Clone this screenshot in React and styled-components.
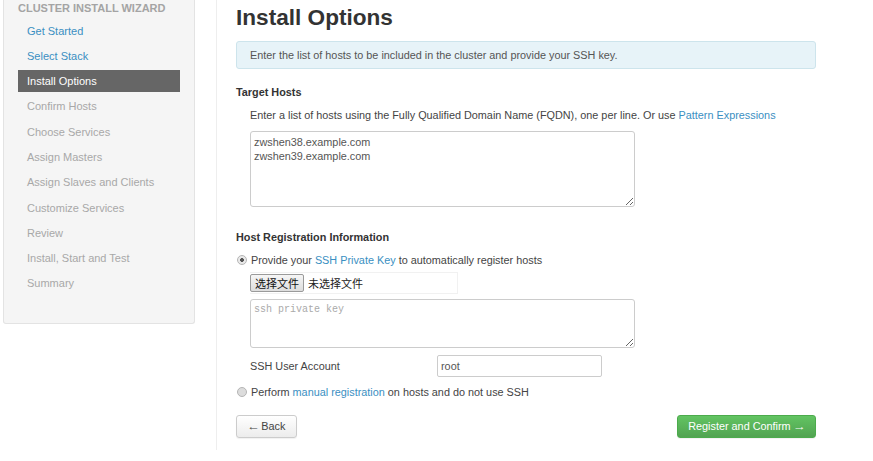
import React from "react";
import styled, { createGlobalStyle } from "styled-components";

const GlobalStyle = createGlobalStyle`
  body {
    margin: 0;
    background: #ffffff;
    font-family: "Liberation Sans", Arial, sans-serif;
    font-size: 10.85px;
    color: #333;
  }
`;

const Page = styled.div`
  display: flex;
  align-items: flex-start;
  width: 873px;
  height: 461px;
  overflow: hidden;
`;

const Sidebar = styled.div`
  margin-left: 3px;
  padding: 1px 14px 27px;
  box-sizing: border-box;
  width: 192px;
  background: #f5f5f5;
  border: 1px solid #e3e3e3;
  border-top: none;
  border-radius: 0 0 3px 3px;
`;

const SideHeader = styled.div`
  line-height: 14px;
  font-size: 11px;
  font-weight: bold;
  color: #a4a4a4;
  text-transform: uppercase;
  margin-bottom: 3px;
`;

const NavList = styled.div`
  display: flex;
  flex-direction: column;
`;

const NavItem = styled.div`
  height: 22px;
  line-height: 22px;
  margin: 1.65px 0;
  padding-left: 9px;
  font-size: 11px;
  color: ${(p) => (p.$state === "done" ? "#3a8fc2" : p.$state === "active" ? "#ffffff" : "#a8a8a8")};
  background: ${(p) => (p.$state === "active" ? "#666666" : "transparent")};
`;

const Content = styled.div`
  margin-left: 21px;
  border-left: 1px solid #eeeeee;
  padding-left: 19px;
  height: 450px;
  width: 580px;
`;

const Title = styled.h2`
  margin: 0;
  padding-top: 5px;
  line-height: 26px;
  font-size: 22.6px;
  font-weight: bold;
  color: #333;
`;

const Alert = styled.div`
  margin-top: 10px;
  height: 26px;
  line-height: 26px;
  padding-left: 13px;
  background: #e7f3f8;
  border: 1px solid #cde4ec;
  border-radius: 3px;
  color: #555;
`;

const SectionTitle = styled.div`
  margin-top: ${(p) => p.$top}px;
  line-height: 14px;
  font-weight: bold;
  color: #333;
`;

const Indented = styled.div`
  padding-left: 14px;
`;

const Text = styled.div`
  margin-top: ${(p) => p.$top || 0}px;
  line-height: 14px;
  color: #444;
`;

const Link = styled.a`
  color: #3a8fc2;
  text-decoration: none;
`;

const TextArea = styled.textarea`
  display: block;
  margin-top: ${(p) => p.$top}px;
  width: 385px;
  height: ${(p) => p.$h}px;
  box-sizing: border-box;
  padding: 3px 3px;
  border: 1px solid #cccccc;
  border-radius: 3px;
  font-family: ${(p) => (p.$mono ? '"Liberation Mono", monospace' : '"Liberation Sans", Arial, sans-serif')};
  font-size: ${(p) => (p.$mono ? 10 : 10.85)}px;
  line-height: 14px;
  color: #555;
  resize: vertical;
  outline: none;
  &::placeholder {
    color: #aaaaaa;
  }
`;

const RadioRow = styled.div`
  display: flex;
  align-items: center;
  margin-top: ${(p) => p.$top}px;
  line-height: 14px;
  color: #444;
  gap: 4px;
`;

const Radio = styled.span`
  width: 8px;
  height: 8px;
  border-radius: 50%;
  border: 1px solid #b5b5b5;
  background: ${(p) => (p.$checked ? "radial-gradient(circle, #555 0 1.6px, #e9e9e9 2.2px)" : "#dcdcdc")};
  margin-left: 1px;
`;

const FileRow = styled.div`
  display: flex;
  align-items: center;
  margin-top: 5px;
  margin-left: 14px;
  width: 208px;
  height: 22px;
  box-sizing: border-box;
  border: 1px solid #f1f1f1;
  border-left: none;
  font-family: "Noto Sans CJK SC", sans-serif;
  font-size: 11px;
  color: #222;
`;

const FileButton = styled.button`
  height: 18px;
  padding: 0 4px;
  margin-right: 4px;
  border: 1px solid #9a9a9a;
  border-radius: 2px;
  background: linear-gradient(#f6f6f6, #dddddd);
  font-family: "Noto Sans CJK SC", sans-serif;
  font-size: 11px;
  line-height: 16px;
  color: #111;
`;

const FieldRow = styled.div`
  display: flex;
  align-items: center;
  margin-top: 7px;
  padding-left: 14px;
  height: 22px;
`;

const FieldLabel = styled.div`
  width: 187px;
  color: #444;
`;

const Input = styled.input`
  width: 165px;
  height: 22px;
  box-sizing: border-box;
  padding: 0 3px;
  border: 1px solid #cccccc;
  border-radius: 2px;
  font-family: "Liberation Sans", Arial, sans-serif;
  font-size: 10.85px;
  color: #555;
  outline: none;
`;

const Actions = styled.div`
  display: flex;
  justify-content: space-between;
  margin-top: 16px;
`;

const Button = styled.button`
  height: 23px;
  padding: 0 ${(p) => (p.$primary ? 10.5 : 10.5)}px;
  border-radius: 3px;
  font-family: "Liberation Sans", Arial, sans-serif;
  font-size: 10.85px;
  line-height: 21px;
  color: ${(p) => (p.$primary ? "#ffffff" : "#444")};
  border: 1px solid ${(p) => (p.$primary ? "#4cab4c" : "#cccccc")};
  background: ${(p) =>
    p.$primary ? "linear-gradient(#62c462, #51a351)" : "linear-gradient(#ffffff, #ececec)"};
  box-shadow: 0 1px 1px rgba(0, 0, 0, 0.06);
`;

const Arrow = styled.span`
  display: inline-block;
  transform: scaleX(1.2);
`;

const steps = [
  ["Get Started", "done"],
  ["Select Stack", "done"],
  ["Install Options", "active"],
  ["Confirm Hosts", "todo"],
  ["Choose Services", "todo"],
  ["Assign Masters", "todo"],
  ["Assign Slaves and Clients", "todo"],
  ["Customize Services", "todo"],
  ["Review", "todo"],
  ["Install, Start and Test", "todo"],
  ["Summary", "todo"],
];

export default function App() {
  return (
    <>
      <GlobalStyle />
      <Page>
        <Sidebar>
          <SideHeader>Cluster Install Wizard</SideHeader>
          <NavList>
            {steps.map(([name, state]) => (
              <NavItem key={name} $state={state}>
                {name}
              </NavItem>
            ))}
          </NavList>
        </Sidebar>

        <Content>
          <Title>Install Options</Title>
          <Alert>Enter the list of hosts to be included in the cluster and provide your SSH key.</Alert>

          <SectionTitle $top={16}>Target Hosts</SectionTitle>
          <Indented>
            <Text $top={9}>
              Enter a list of hosts using the Fully Qualified Domain Name (FQDN), one per line. Or use{" "}
              <Link href="#">Pattern Expressions</Link>
            </Text>
            <TextArea
              $top={9}
              $h={76}
              defaultValue={"zwshen38.example.com\nzwshen39.example.com"}
            />
          </Indented>

          <SectionTitle $top={23}>Host Registration Information</SectionTitle>
          <RadioRow $top={9}>
            <Radio $checked />
            <span>
              Provide your <Link href="#">SSH Private Key</Link> to automatically register hosts
            </span>
          </RadioRow>
          <FileRow>
            <FileButton>选择文件</FileButton>
            <span>未选择文件</span>
          </FileRow>
          <Indented>
            <TextArea $top={5} $h={49} $mono placeholder="ssh private key" />
          </Indented>
          <FieldRow>
            <FieldLabel>SSH User Account</FieldLabel>
            <Input defaultValue="root" />
          </FieldRow>
          <RadioRow $top={8}>
            <Radio />
            <span>
              Perform <Link href="#">manual registration</Link> on hosts and do not use SSH
            </span>
          </RadioRow>

          <Actions>
            <Button>
              <Arrow>←</Arrow> Back
            </Button>
            <Button $primary>
              Register and Confirm <Arrow>→</Arrow>
            </Button>
          </Actions>
        </Content>
      </Page>
    </>
  );
}
